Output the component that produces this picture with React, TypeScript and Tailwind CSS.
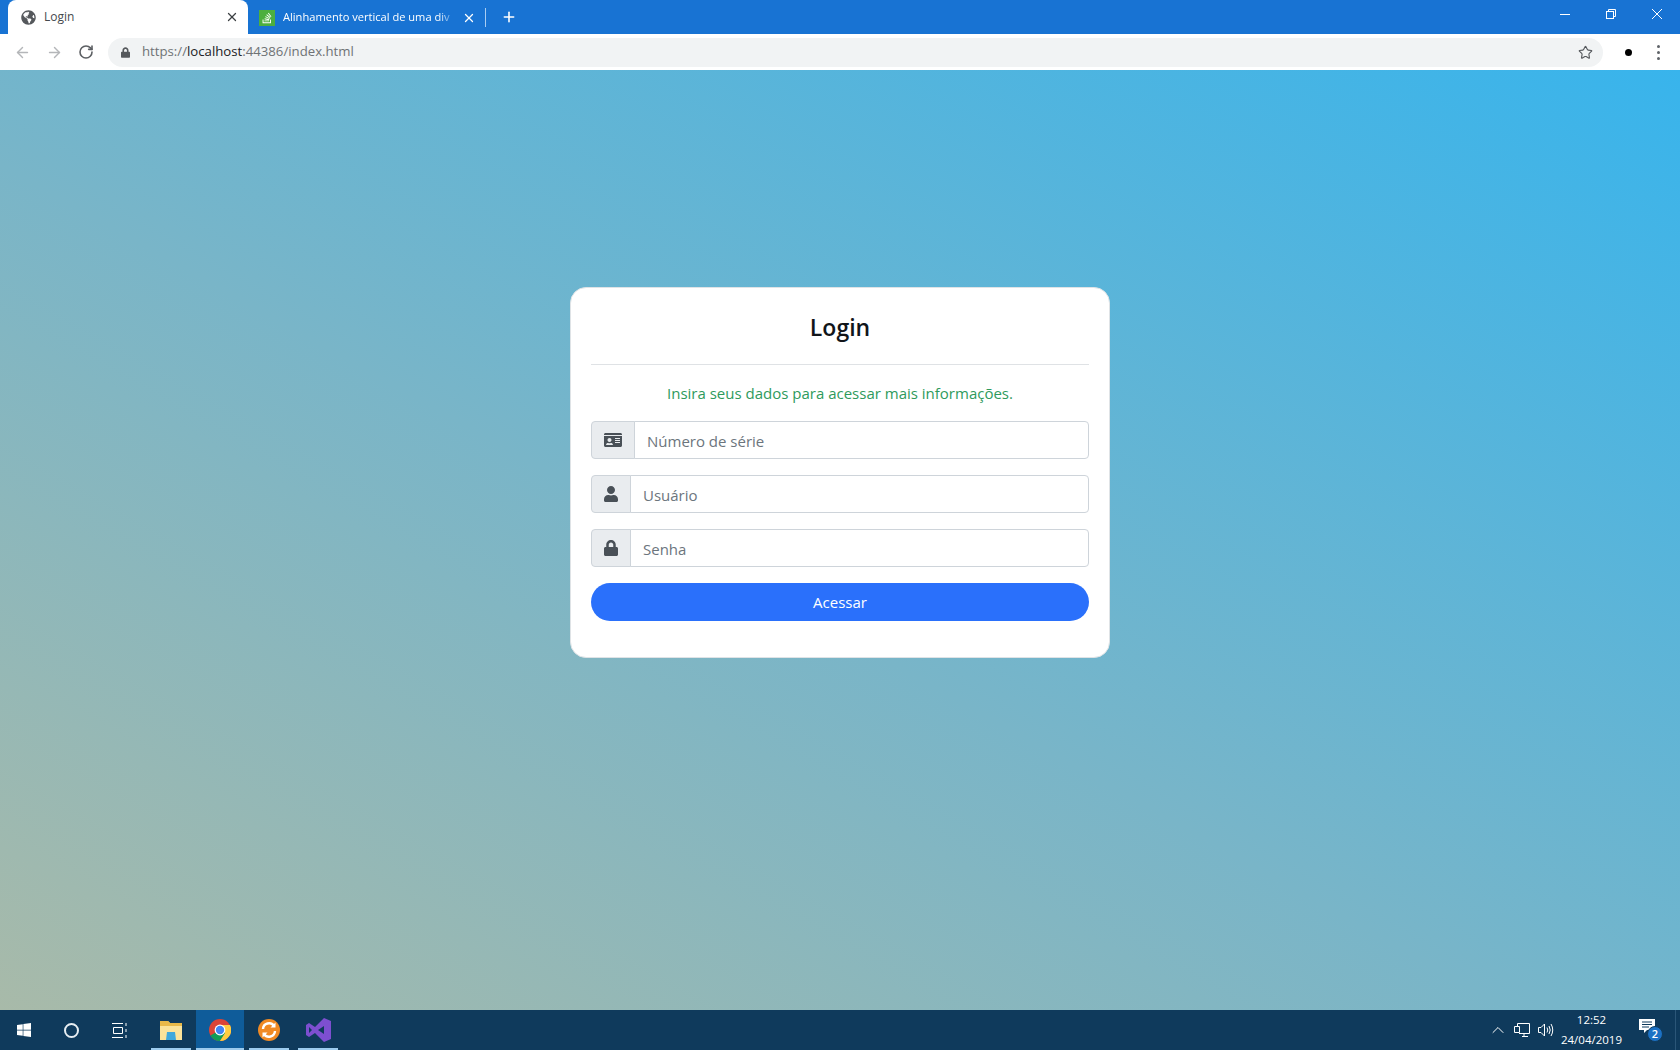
import React from 'react';
import { ArrowLeft, ArrowRight, RotateCw, Star, X, Plus, ChevronUp } from 'lucide-react';
import { FaGlobeAmericas, FaIdCard, FaUser, FaLock, FaStackOverflow, FaWindows } from 'react-icons/fa';

const font = "font-['Open_Sans','Noto_Sans',sans-serif]";

function BrowserChrome() {
  return (
    <header className="shrink-0">
      {/* Tabs */}
      <div className="flex items-end h-[34px] bg-[#1873d3] text-[12px]">
        <div className="relative ml-[8px] flex items-center w-[240px] h-[34px] bg-white rounded-t-[8px] pl-[13px] pr-[9px] text-[#45494d]">
          <FaGlobeAmericas className="w-[15px] h-[15px] text-[#55585c]" />
          <span className="ml-[8px] flex-1">Login</span>
          <X className="w-[14px] h-[14px] text-[#3c4043]" strokeWidth={2.2} />
        </div>
        <div className="flex items-center w-[237px] h-[33px] pl-[11px] pr-[9px] text-white">
          <div className="flex items-center justify-center shrink-0 w-[16px] h-[16px] bg-[#4caf3e] text-white">
            <FaStackOverflow className="w-[12px] h-[12px]" />
          </div>
          <span className="ml-[8px] flex-1 text-[11.1px] whitespace-nowrap [mask-image:linear-gradient(to_right,black_90%,transparent)]">
            Alinhamento vertical de uma div
          </span>
          <X className="ml-[6px] shrink-0 w-[14px] h-[14px]" strokeWidth={2.2} />
        </div>
        <div className="w-px h-[19px] mb-[7px] bg-[#a9cdf2]" />
        <Plus className="ml-[15px] mb-[9px] w-[16px] h-[16px] text-white" strokeWidth={2.4} />
        <div className="ml-auto flex items-center self-start h-[28px] text-white">
          <div className="mr-[36px] w-[10px] h-px bg-white" />
          <svg className="mr-[36px] w-[10px] h-[10px]" viewBox="0 0 10 10" fill="none" stroke="currentColor">
            <rect x="0.5" y="2.5" width="7" height="7" />
            <path d="M2.5 2.5V0.5H9.500V7.500H7.500" />
          </svg>
          <svg className="mr-[18px] w-[10px] h-[10px]" viewBox="0 0 10 10" fill="none" stroke="currentColor">
            <path d="M0 0L10 10M10 0L0 10" />
          </svg>
        </div>
      </div>

      {/* Address bar */}
      <div className="flex items-center h-[36px] bg-white">
        <ArrowLeft className="ml-[14px] w-[17px] h-[17px] text-[#b4b6b9]" strokeWidth={2} />
        <ArrowRight className="ml-[15px] w-[17px] h-[17px] text-[#b4b6b9]" strokeWidth={2} />
        <RotateCw className="ml-[15px] w-[16px] h-[16px] text-[#5c5f63]" strokeWidth={2.4} />
        <div className="ml-[14px] flex items-center w-[1495px] h-[29px] rounded-full bg-[#f1f3f4] pl-[13px] pr-[10px] text-[13.2px]">
          <FaLock className="w-[9px] h-[11px] text-[#55585c]" />
          <span className="ml-[12px] text-[#6f7275]">
            https://<span className="text-[#202124]">localhost</span>:44386/index.html
          </span>
          <Star className="ml-auto w-[15px] h-[15px] text-[#55585c]" strokeWidth={1.8} />
        </div>
        <div className="ml-[22px] w-[7px] h-[7px] rounded-full bg-black" />
        <div className="ml-[25px] flex flex-col gap-[3px]">
          <div className="w-[3px] h-[3px] rounded-full bg-[#5f6368]" />
          <div className="w-[3px] h-[3px] rounded-full bg-[#5f6368]" />
          <div className="w-[3px] h-[3px] rounded-full bg-[#5f6368]" />
        </div>
      </div>
    </header>
  );
}

function Field({ icon, addon, placeholder }: { icon: React.ReactNode; addon: string; placeholder: string }) {
  return (
    <div className="flex h-[38px] mb-[16px]">
      <div className={`flex items-center justify-center ${addon} shrink-0 bg-[#e9ecef] border border-[#ced4da] rounded-l-[4px] text-[#495057]`}>
        {icon}
      </div>
      <input
        readOnly
        placeholder={placeholder}
        className="flex-1 min-w-0 -ml-px px-[12px] pt-[2px] bg-white border border-[#ced4da] rounded-r-[4px] text-[15px] placeholder:text-[#6c757d] outline-none"
      />
    </div>
  );
}

function LoginCard() {
  return (
    <div className="w-[540px] h-[371px] bg-white rounded-[16px] border border-[#dfe3e6] px-[20px] pt-[22px]">
      <h1 className="text-center text-[23px] leading-[34px] font-semibold text-[#11151a]">Login</h1>
      <hr className="mt-[20px] border-[#dfe2e5]" />
      <p className="mt-[16px] mb-[16px] text-center text-[15px] leading-[24px] text-[#2e9a5c]">
        Insira seus dados para acessar mais informações.
      </p>
      <Field addon="w-[44px]" placeholder="Número de série" icon={<FaIdCard className="w-[18px] h-[16px]" />} />
      <Field addon="w-[40px]" placeholder="Usuário" icon={<FaUser className="w-[14px] h-[16px]" />} />
      <Field addon="w-[40px]" placeholder="Senha" icon={<FaLock className="w-[14px] h-[16px]" />} />
      <button className="w-full h-[38px] pt-px rounded-[19px] bg-[#2a70fb] text-white text-[15px]">Acessar</button>
    </div>
  );
}

function Taskbar() {
  return (
    <footer className="shrink-0 flex items-center h-[40px] bg-[#0f3a5c] text-white">
      <FaWindows className="ml-[16px] w-[16px] h-[16px]" />
      <div className="ml-[32px] w-[15px] h-[15px] rounded-full border-2 border-[#e6edf2]" />
      <svg className="ml-[33px] w-[17px] h-[15px]" viewBox="0 0 17 15" fill="none" stroke="white">
        <path d="M0 0.500H11M0 14.500H11M1.500 4.500H10.500V10.500H1.500ZM14 0V3M14 6V9M14 12V15" />
      </svg>
      <div className="ml-[22px] relative flex items-center justify-center w-[40px] h-full">
        <svg className="w-[22px] h-[19px]" viewBox="0 0 22 19">
          <path d="M0 0H8L10 2H22V19H0Z" fill="#fbe39a" />
          <path d="M0 0H8L10 2H22V5H0Z" fill="#e9b949" />
          <path d="M7 11H15L16 19H6Z" fill="#3fa8dc" />
        </svg>
        <div className="absolute left-0 right-0 bottom-0 h-[2px] bg-[#9ccbee]" />
      </div>
      <div className="ml-[5px] relative flex items-center justify-center w-[48px] h-full bg-[#0f5c9a]">
        <svg className="w-[22px] h-[22px]" viewBox="0 0 22 22">
          <circle cx="11" cy="11" r="11" fill="#db4437" />
          <path d="M11 11L1.500 16.500A11 11 0 0 0 11 22L21 7H11Z" fill="#0f9d58" />
          <path d="M21 6H11L16 14L11 22A11 11 0 0 0 21 6Z" fill="#ffcd40" />
          <circle cx="11" cy="11" r="5.400" fill="white" />
          <circle cx="11" cy="11" r="4.200" fill="#4285f4" />
        </svg>
        <div className="absolute left-0 right-0 bottom-0 h-[2px] bg-[#9ccbee]" />
      </div>
      <div className="relative flex items-center justify-center ml-[5px] w-[40px] h-full">
        <svg className="w-[22px] h-[22px]" viewBox="0 0 22 22" fill="none">
          <circle cx="11" cy="11" r="11" fill="#f08a24" />
          <path d="M5 10A6 6 0 0 1 16 7M17 12A6 6 0 0 1 6 15" stroke="white" strokeWidth="2.400" />
          <path d="M17.500 3.500V8.500H12.500ZM4.500 18.500V13.500H9.500Z" fill="white" />
        </svg>
        <div className="absolute left-0 right-0 bottom-0 h-[2px] bg-[#9ccbee]" />
      </div>
      <div className="relative flex items-center justify-center ml-[9px] w-[40px] h-full">
        <svg className="w-[25px] h-[24px]" viewBox="0 0 25 24">
          <path d="M18 0L25 3V21L18 24L9 15L3 19L0 17V7L3 5L9 9ZM18 8L12 12L18 16ZM3 9V15L6 12Z" fill="#7d4fd0" />
        </svg>
        <div className="absolute left-0 right-0 bottom-0 h-[2px] bg-[#9ccbee]" />
      </div>

      {/* Tray */}
      <div className="ml-auto flex items-center h-full">
        <ChevronUp className="-mr-[2px] w-[20px] h-[20px]" strokeWidth={1.2} />
        <svg className="ml-[8px] w-[16px] h-[14px]" viewBox="0 0 16 14" fill="none" stroke="white">
          <path d="M3.500 3.500V0.500H15.500V10.500H5M8 13.500H14M10 10.500V13.500M0.500 3.500H5.500V9.500H0.500Z" />
        </svg>
        <svg className="ml-[8px] w-[16px] h-[14px]" viewBox="0 0 16 14" fill="none" stroke="white">
          <path d="M0.500 4.500H3L6.500 1V13L3 9.500H0.500ZM9 4.500Q10.500 7 9 9.500M11 3Q13.500 7 11 11M13 1Q16.500 7 13 13" />
        </svg>
        <div className="w-[75px] text-center text-[11.5px] leading-[20px]">
          <div>12:52</div>
          <div>24/04/2019</div>
        </div>
        <div className="relative ml-[10px] mr-[20px] w-[16px] h-[26px]">
          <svg className="mt-[2px] w-[16px] h-[15px]" viewBox="0 0 16 15">
            <path d="M0 0H16V11H8L5 14V11H0Z" fill="white" />
            <path d="M3 3H13M3 5.500H13M3 8H10" stroke="#0f3a5c" />
          </svg>
          <div className="absolute left-[8px] top-[9px] flex items-center justify-center w-[16px] h-[16px] rounded-full bg-[#1c71c4] border border-[#0f3a5c] text-[11px] font-semibold">2</div>
        </div>
        <div className="w-px h-full bg-[#2b5678]" />
        <div className="w-[4px]" />
      </div>
    </footer>
  );
}

export default function App() {
  return (
    <div className={`flex flex-col h-screen overflow-hidden ${font}`}>
      <BrowserChrome />
      <main className="flex-1 flex justify-center items-start pt-[217px] bg-[linear-gradient(to_top_right,#a8baa9,#79b5c8_45%,#38b4ec)]">
        <LoginCard />
      </main>
      <Taskbar />
    </div>
  );
}
